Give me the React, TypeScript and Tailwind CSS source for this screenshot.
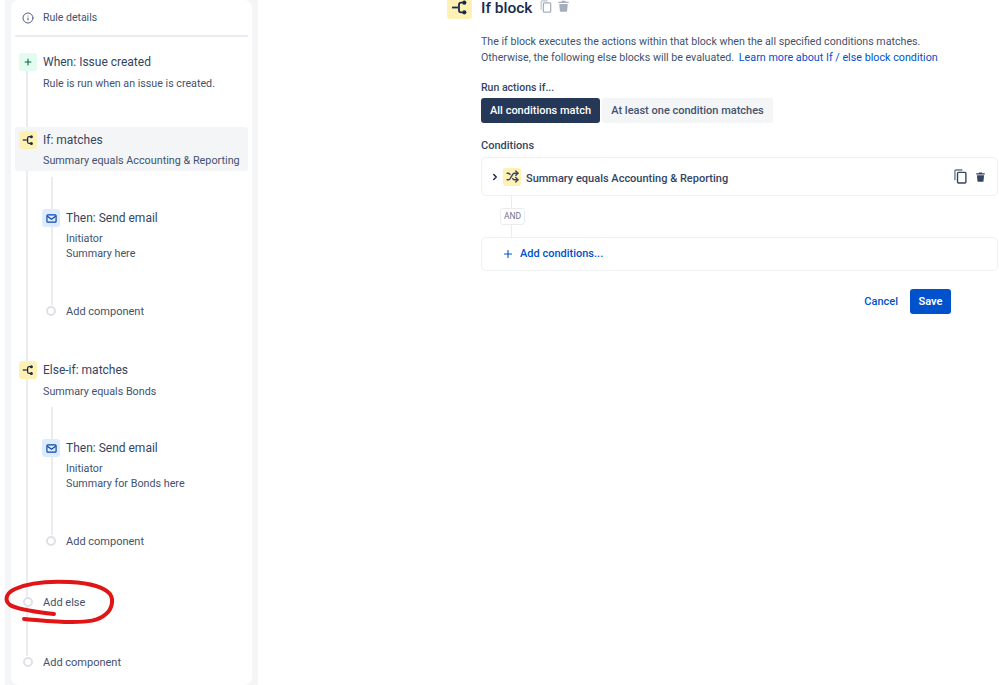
import React from 'react';
import { Info, Plus, Shuffle, ChevronRight } from 'lucide-react';

const BranchIcon = ({ className }: { className?: string }) => (
    <svg viewBox="0 0 16 16" fill="none" stroke="currentColor" strokeWidth="1.7" className={className}>
        <path d="M1 8H6.500" />
        <path d="M11 3.500H9.500C7.800 3.500 7.500 4.500 7.500 5.500v5c0 1 .3 2 2 2H11" />
        <circle cx="12.500" cy="3.500" r="2" fill="currentColor" stroke="none" />
        <circle cx="12.500" cy="12.500" r="2" fill="currentColor" stroke="none" />
    </svg>
);

const MailIcon = () => (
    <svg viewBox="0 0 12 12" className="w-[11px] h-[11px] text-[#0747a6]" fill="none" stroke="currentColor" strokeWidth="1.3">
        <rect x="1" y="2" width="10" height="8" rx="1" />
        <path d="M1.500 3.500L6 6.800l4.500-3.300" />
    </svg>
);

const CopyIcon = ({ className }: { className?: string }) => (
    <svg viewBox="0 0 14 16" fill="none" className={className} stroke="currentColor">
        <path d="M1 12V2.200C1 1.500 1.500 1 2.200 1H9" strokeWidth="1.400" opacity="0.75" />
        <rect x="3.800" y="3.600" width="9" height="11.400" rx="1" strokeWidth="1.500" />
    </svg>
);

const TrashIcon = ({ className }: { className?: string }) => (
    <svg viewBox="0 0 12 14" fill="currentColor" className={className}>
        <path d="M4 .8h4l.6 1.100H12v1.600H0V1.900h3.400z" />
        <path d="M1 4.600h10l-.8 8.200c0 .6-.5 1-1.100 1H2.900c-.6 0-1.100-.4-1.100-1z" />
    </svg>
);

const Dot = ({ className }: { className?: string }) => (
    <span className={`w-[10px] h-[10px] rounded-full border-2 border-[#dfe1e6] bg-white shrink-0 ${className ?? ''}`} />
);

const IconTile = ({ color, children }: { color: string; children: React.ReactNode }) => (
    <span className={`relative w-[18px] h-[18px] rounded-[3px] flex items-center justify-center shrink-0 ${color}`}>
        {children}
    </span>
);

const ThenBlock = ({ summary, top }: { summary: string; top: string }) => (
    <div className={`relative ml-[27px] ${top}`}>
        {/* nested rail */}
        <span className="absolute left-[9px] top-0 h-[128px] w-[2px] bg-[#ebecf0]" />
        <div className="pt-[32px] flex gap-[6px] items-center relative">
            <IconTile color="bg-[#deebff]"><MailIcon /></IconTile>
            <span className="text-[12px] leading-[18px] text-[#344563]">Then: Send email</span>
        </div>
        <div className="relative pl-[24px] mt-[4px] text-[10.750px] leading-[15px] text-[#42526e]">
            <div>Initiator</div>
            <div>{summary}</div>
        </div>
        <div className="relative mt-[42px] flex items-center">
            <Dot className="ml-[4px]" />
            <span className="ml-[10px] pt-[2px] text-[11px] leading-[14px] text-[#42526e]">Add component</span>
        </div>
    </div>
);

export default function App() {
    return (
        <div
            className="relative flex w-[999px] h-[685px] overflow-hidden bg-white"
            style={{ fontFamily: 'Roboto, "Noto Sans", sans-serif' }}
        >
            {/* Left rule column */}
            <div className="ml-[5px] w-[253px] h-full shrink-0 bg-[#f4f5f7] px-[6px]">
                <div className="relative h-full rounded-lg bg-white px-[4px]">
                    {/* main rail */}
                    <span className="absolute left-[15px] top-[70px] h-[586px] w-[2px] bg-[#ebecf0]" />

                    <div className="flex items-center h-[37px] border-b-2 border-[#ebecf0] pl-[7px]">
                        <Info className="w-[12px] h-[12px] text-[#505f79]" strokeWidth={2} />
                        <span className="ml-[9px] text-[10.500px] text-[#42526e]">Rule details</span>
                    </div>

                    <div className="relative mt-[16px] pl-[4px] flex items-center gap-[6px]">
                        <IconTile color="bg-[#e3fcef]"><Plus className="w-[10px] h-[10px] text-[#006644]" strokeWidth={2.500} /></IconTile>
                        <span className="text-[12px] leading-[18px] text-[#344563]">When: Issue created</span>
                    </div>
                    <div className="relative pl-[28px] mt-[5px] text-[10.700px] leading-[15px] text-[#42526e]">Rule is run when an issue is created.</div>

                    <div className="relative mt-[36px] h-[44px] rounded-[3px] bg-[#f4f5f7] pl-[4px] pt-[4px]">
                        <div className="flex items-center gap-[6px]">
                            <IconTile color="bg-[#fff0b3]"><BranchIcon className="w-[12px] h-[12px] text-[#172b4d]" /></IconTile>
                            <span className="text-[12px] leading-[18px] text-[#344563]">If: matches</span>
                        </div>
                        <div className="pl-[24px] mt-[4px] text-[10.800px] leading-[15px] text-[#42526e] whitespace-nowrap">Summary equals Accounting &amp; Reporting</div>
                    </div>

                    <ThenBlock top="mt-[6px]" summary="Summary here" />

                    <div className="relative mt-[42px] pl-[4px] flex items-center gap-[6px]">
                        <IconTile color="bg-[#fff0b3]"><BranchIcon className="w-[12px] h-[12px] text-[#172b4d]" /></IconTile>
                        <span className="text-[12px] leading-[18px] text-[#344563]">Else-if: matches</span>
                    </div>
                    <div className="relative pl-[28px] mt-[5px] text-[10.750px] leading-[15px] text-[#42526e]">Summary equals Bonds</div>

                    <ThenBlock top="mt-[8px]" summary="Summary for Bonds here" />

                    <div className="relative mt-[45px] flex items-center">
                        <Dot className="ml-[8px]" />
                        <span className="ml-[10px] pt-[2px] text-[11px] leading-[14px] text-[#42526e]">Add else</span>
                    </div>
                    <div className="relative mt-[44px] flex items-center">
                        <Dot className="ml-[8px]" />
                        <span className="ml-[10px] pt-[2px] text-[11px] leading-[14px] text-[#42526e]">Add component</span>
                    </div>
                </div>
            </div>

            {/* Right detail panel */}
            <div className="ml-[189px] flex-1 min-w-0">
                <div className="flex items-start h-[19px]">
                    <span className="w-[25px] h-[19px] rounded-b-[3px] bg-[#fff0b3] flex justify-center shrink-0">
                        <BranchIcon className="w-[17px] h-[17px] -mt-[1px] text-[#172b4d]" />
                    </span>
                    <span className="ml-[9px] text-[15.500px] leading-[16px] font-medium text-[#172b4d]">If block</span>
                    <CopyIcon className="ml-[8px] w-[12px] h-[13px] text-[#a5adba]" />
                    <TrashIcon className="ml-[6px] w-[11px] h-[12px] text-[#a5adba]" />
                </div>

                <div className="ml-[34px]">
                    <p className="mt-[15px] text-[10.650px] leading-[15.500px] text-[#42526e] whitespace-nowrap">
                        The if block executes the actions within that block when the all specified conditions matches.<br />
                        Otherwise, the following else blocks will be evaluated. <span className="ml-[2px] text-[10.750px] text-[#0052cc]">Learn more about If / else block condition</span>
                    </p>

                    <div className="mt-[15px] text-[10.500px] leading-[15px] font-medium text-[#344563]">Run actions if...</div>
                    <div className="mt-[3px] flex gap-[2px]">
                        <span className="w-[119px] h-[25px] pt-[1px] rounded-[3px] bg-[#253858] text-white text-[11px] font-medium flex items-center justify-center">All conditions match</span>
                        <span className="w-[171px] h-[25px] pt-[1px] rounded-[3px] bg-[#f4f5f7] text-[#42526e] text-[11px] font-medium flex items-center justify-center">At least one condition matches</span>
                    </div>

                    <div className="mt-[15px] text-[11px] leading-[15px] font-medium text-[#344563]">Conditions</div>
                    <div className="mt-[4px] w-[517px] h-[39px] rounded-[5px] border border-[#f0f1f3] flex items-center pl-[8px] pr-[12px]">
                        <ChevronRight className="w-[10px] h-[10px] text-[#172b4d]" strokeWidth={3.500} />
                        <span className="ml-[3px]"><IconTile color="bg-[#fff0b3]"><Shuffle className="w-[13px] h-[13px] text-[#344563]" strokeWidth={2.500} /></IconTile></span>
                        <span className="ml-[5px] pt-[3px] text-[11px] leading-[15px] font-medium text-[#344563]">Summary equals Accounting &amp; Reporting</span>
                        <CopyIcon className="ml-auto w-[13px] h-[15px] text-[#344563]" />
                        <TrashIcon className="ml-[9px] w-[9px] h-[10px] text-[#344563]" />
                    </div>

                    {/* AND connector */}
                    <div className="relative h-[41px] pl-[19px] flex items-center">
                        <span className="absolute left-[30px] top-0 h-full w-[1px] bg-[#ebecf0]" />
                        <span className="relative w-[25px] h-[17px] rounded-[3px] border border-[#ebecf0] bg-white text-[8.500px] text-[#6b778c] flex items-center justify-center">AND</span>
                    </div>

                    <div className="w-[517px] h-[34px] rounded-[5px] border border-[#f0f1f3] flex items-center pl-[20px]">
                        <Plus className="w-[12px] h-[12px] text-[#0052cc]" strokeWidth={2.200} />
                        <span className="ml-[6px] text-[11px] font-medium text-[#0052cc]">Add conditions...</span>
                    </div>

                    <div className="mt-[18px] w-[470px] flex items-center justify-end">
                        <span className="pt-[1px] text-[11px] font-medium text-[#0052cc]">Cancel</span>
                        <span className="ml-[12px] w-[41px] h-[25px] pt-[1px] rounded-[3px] bg-[#0052cc] text-white text-[11px] font-semibold flex items-center justify-center">Save</span>
                    </div>
                </div>
            </div>

            {/* Red annotation */}
            <svg className="absolute left-0 top-0 w-[999px] h-[685px] pointer-events-none" viewBox="0 0 999 685" fill="none">
                <path
                    d="M54 614C38 612 18 610 10 605C4 600 6 593 15 589C30 582 52 581 70 582C88 583 104 587 110 594C114 600 112 609 106 614C98 621 88 622 72 622C55 622 38 620 24 619"
                    stroke="#e01515"
                    strokeWidth="4"
                    strokeLinecap="round"
                    strokeLinejoin="round"
                />
            </svg>
        </div>
    );
}
